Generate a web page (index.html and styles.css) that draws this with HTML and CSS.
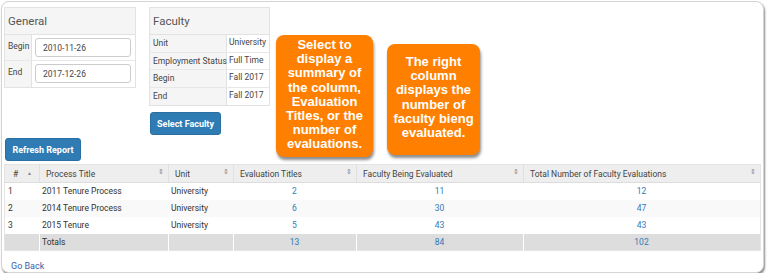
FILE: index.html
```html
<!DOCTYPE html>
<html>
<head>
<meta charset="utf-8">
<link rel="stylesheet" href="styles.css">
</head>
<body>
<div class="card">
  <div class="top">
    <div class="panel general">
      <div class="panel-head">General</div>
      <div class="grow"><div class="lbl">Begin</div><div class="val"><div class="input">2010-11-26</div></div></div>
      <div class="grow"><div class="lbl">End</div><div class="val"><div class="input">2017-12-26</div></div></div>
    </div>
    <div class="fac-col">
      <div class="panel faculty">
        <div class="panel-head">Faculty</div>
        <div class="frow"><div class="flbl">Unit</div><div class="fval">University</div></div>
        <div class="frow"><div class="flbl">Employment Status</div><div class="fval">Full Time</div></div>
        <div class="frow"><div class="flbl">Begin</div><div class="fval">Fall 2017</div></div>
        <div class="frow"><div class="flbl">End</div><div class="fval">Fall 2017</div></div>
      </div>
      <button class="btn sel">Select Faculty</button>
    </div>
  </div>
  <button class="btn refresh">Refresh Report</button>
  <table class="report">
    <colgroup>
      <col style="width:35px"><col style="width:129px"><col style="width:65px"><col style="width:123px"><col style="width:167px"><col style="width:237px">
    </colgroup>
    <thead>
      <tr>
        <th><span>#</span><span class="sort up">&#9650;</span></th>
        <th><span>Process Title</span><span class="sort">&#8661;</span></th>
        <th><span>Unit</span><span class="sort">&#8661;</span></th>
        <th><span>Evaluation Titles</span><span class="sort">&#8661;</span></th>
        <th><span>Faculty Being Evaluated</span><span class="sort">&#8661;</span></th>
        <th><span>Total Number of Faculty Evaluations</span><span class="sort">&#8661;</span></th>
      </tr>
    </thead>
    <tbody>
      <tr><td>1</td><td>2011 Tenure Process</td><td>University</td><td class="n">2</td><td class="n">11</td><td class="n">12</td></tr>
      <tr class="alt"><td>2</td><td>2014 Tenure Process</td><td>University</td><td class="n">6</td><td class="n">30</td><td class="n">47</td></tr>
      <tr><td>3</td><td>2015 Tenure</td><td>University</td><td class="n">5</td><td class="n">43</td><td class="n">43</td></tr>
      <tr class="tot"><td></td><td>Totals</td><td></td><td class="n">13</td><td class="n">84</td><td class="n">102</td></tr>
    </tbody>
  </table>
  <a class="back" href="#">Go Back</a>
  <div class="callout c1">Select to display a summary of the column, Evaluation Titles, or the number of evaluations.</div>
  <div class="callout c2">The right column displays the number of faculty bieng evaluated.</div>
</div>
</body>
</html>
```
FILE: styles.css
```css
html, body { margin: 0; padding: 0; background: #fff; }
body { font-family: Roboto, "Liberation Sans", sans-serif; color: #333; }
.card {
  position: relative;
  width: 763px; height: 272px;
  box-sizing: border-box;
  margin: 1px 0 0 1px;
  border: 1px solid #d4d4d4;
  border-radius: 8px;
  box-shadow: 1px 2px 2px rgba(0,0,0,0.45);
  padding: 5px 2px 0 2px;
  background: #fff;
}
.top { display: flex; gap: 13px; align-items: flex-start; }
.panel { border: 1px solid #e2e2e2; box-sizing: border-box; }
.panel-head {
  background: #f5f5f5; height: 27px; box-sizing: border-box;
  padding: 6px 3px 0; font-size: 11.5px; color: #555; border-bottom: 1px solid #e2e2e2;
}
.general { width: 132px; }
.grow { display: flex; height: 26px; border-bottom: 1px solid #e8e8e8; box-sizing: border-box; }
.grow:last-child { border-bottom: none; }
.lbl { width: 27px; background: #f5f5f5; border-right: 1px solid #e2e2e2; font-size: 8.5px; padding: 6px 0 0 3px; box-sizing: border-box; color: #444; }
.val { flex: 1; padding: 3px 3px 0 3px; }
.input { height: 19px; box-sizing: border-box; border: 1px solid #ccc; border-radius: 3px; font-size: 8.5px; padding: 4px 0 0 7px; color: #444; width: 96px; }
.fac-col { display: flex; flex-direction: column; align-items: flex-start; }
.faculty { width: 121px; }
.frow { display: flex; height: 17.5px; border-bottom: 1px solid #e8e8e8; box-sizing: border-box; font-size: 8.5px; }
.frow:last-child { border-bottom: none; }
.flbl { width: 77px; background: #f5f5f5; border-right: 1px solid #e2e2e2; padding: 3px 0 0 3px; box-sizing: border-box; color: #444; white-space: nowrap; }
.fval { flex: 1; padding: 2px 0 0 2px; color: #444; white-space: nowrap; }
.btn {
  font-family: inherit; background: #2f7cb5; color: #fff; border: 1px solid #2a6fa3; border-radius: 3px;
  font-size: 9px; font-weight: 700; height: 23px; padding: 0 6px; box-sizing: border-box; display: block;
}
.sel { margin: 6px 0 0 1px; width: 71px; }
.refresh { margin: 3px 0 0 1px; width: 76px; }
.report { margin-top: 3px; border-collapse: collapse; table-layout: fixed; width: 756px; font-size: 8.5px; }
.report th {
  background: #eee; font-weight: 400; color: #444; height: 17px; text-align: left; padding: 0 4px 0 6px;
  border-right: 1px solid #e0e0e0; border-bottom: 1px solid #ddd; border-top: 1px solid #e4e4e4; position: relative;
}
.report th:first-child { border-left: 1px solid #e4e4e4; padding-left: 8px; }
.report th:last-child { border-right: 1px solid #e4e4e4; }
.report th .sort { position: absolute; right: 4px; top: 3px; font-size: 7px; color: #888; }
.report th .sort.up { right: 7px; font-size: 5px; top: 5px; }
.report td { height: 17px; padding: 0 3px 0 2px; box-sizing: border-box; border-left: 1px solid transparent; }
.report td:first-child { padding-left: 3px; border-left: 1px solid #e4e4e4; }
.report td:last-child { border-right: 1px solid #e4e4e4; }
.report tr.alt td { background: #f9f9f9; }
.report td.n { text-align: center; color: #337ab7; }
.report tr.tot td { background: #ddd; border-left: 1px solid #fff; }
.report tr.tot td:first-child { border-left: 1px solid #e4e4e4; }
.report tr.tot { border-bottom: 1px solid #e4e4e4; }
.back { display: block; width: max-content; line-height: 10px; margin: 10px 0 0 7px; font-size: 9px; color: #3a60a8; text-decoration: none; }
.callout {
  position: absolute; background: #ff7f00; color: #fff; font-family: "Liberation Sans", Arial, sans-serif;
  font-weight: 700; font-size: 13px; line-height: 14.2px; text-align: center; border-radius: 8px;
  box-shadow: 1px 3px 3px rgba(0,0,0,0.45); box-sizing: border-box;
}
.c1 { left: 274px; top: 33px; width: 97px; height: 122px; padding: 3px 3px 0; }
.c2 { left: 385px; top: 42px; width: 93px; height: 111px; padding: 11px 4px 0; }
```
